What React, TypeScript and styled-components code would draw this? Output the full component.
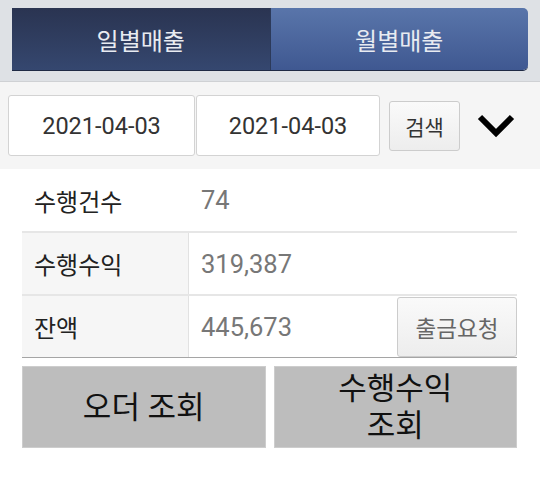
import React from 'react'
import styled, { createGlobalStyle } from 'styled-components'

const GlobalStyle = createGlobalStyle`
  body {
    margin: 0;
    background: #ffffff;
    font-family: Roboto, "Noto Sans CJK KR", sans-serif;
  }
`

const Header = styled.div`
  background: #dee1e5;
  padding: 8px 12px 11px;
  border-bottom: 1px solid #cfd1d4;
`

const Tabs = styled.div`
  display: flex;
  height: 62px;
  border-radius: 0 5px 5px 0;
  overflow: hidden;
  box-shadow: 0 1px 0 #1f2a44;
`

const Tab = styled.div<{ $active?: boolean }>`
  flex: 1;
  display: flex;
  align-items: center;
  justify-content: center;
  font-size: 24px;
  color: #e8ebf1;
  background: ${({ $active }) =>
    $active
      ? 'linear-gradient(#2a3451, #35476f)'
      : 'linear-gradient(#5975aa, #3f5891)'};
  border-left: ${({ $active }) => ($active ? 'none' : '1px solid #2c3a5a')};
`

const SearchBar = styled.div`
  display: flex;
  align-items: center;
  background: #f5f5f5;
  padding: 13px 8px 13px;
`

const DateInput = styled.input<{ $width: number }>`
  box-sizing: border-box;
  width: ${({ $width }) => $width}px;
  height: 61px;
  margin: 0;
  border: 1px solid #d3d3d3;
  border-radius: 3px;
  background: #ffffff;
  text-align: center;
  font-family: Roboto, "Noto Sans CJK KR", sans-serif;
  font-size: 23.5px;
  color: #333333;
  outline: none;
  & + & {
    margin-left: 1px;
  }
`

const GrayButton = styled.button`
  box-sizing: border-box;
  border: 1px solid #cccccc;
  border-radius: 3px;
  background: linear-gradient(#fafafa, #ededed);
  font-family: Roboto, "Noto Sans CJK KR", sans-serif;
  padding: 0;
  cursor: pointer;
`

const SearchButton = styled(GrayButton)`
  width: 71px;
  height: 50px;
  margin-left: 9px;
  font-size: 21px;
  color: #333333;
`

const ToggleIcon = styled.svg`
  margin-left: 17px;
`

const InfoTable = styled.div`
  margin: 0 23px 0 22px;
  border-bottom: 1px solid #a5a5a5;
`

const Row = styled.div<{ $plain?: boolean }>`
  display: grid;
  grid-template-columns: 167px 1fr;
  height: ${({ $plain }) => ($plain ? 62 : 63)}px;
  border-top: ${({ $plain }) => ($plain ? 'none' : '2px solid #e6e6e6')};
  box-sizing: border-box;
`

const Label = styled.div<{ $plain?: boolean }>`
  display: flex;
  align-items: center;
  padding-left: 12px;
  font-size: 24px;
  color: #222222;
  background: ${({ $plain }) => ($plain ? '#ffffff' : '#f6f6f6')};
  border-right: ${({ $plain }) => ($plain ? '1px solid transparent' : '1px solid #e2e2e2')};
`

const Value = styled.div`
  display: flex;
  align-items: center;
  justify-content: space-between;
  padding-left: 12px;
  font-size: 25.5px;
  color: #777777;
`

const WithdrawButton = styled(GrayButton)`
  width: 120px;
  height: 60px;
  font-size: 22.5px;
  color: #666666;
`

const Actions = styled.div`
  display: grid;
  grid-template-columns: 1fr 1fr;
  gap: 8px;
  margin: 8px 23px 0 22px;
`

const ActionButton = styled.button`
  height: 82px;
  border: 1px solid #cdcdcd;
  background: #bdbdbd;
  font-family: Roboto, "Noto Sans CJK KR", sans-serif;
  font-size: 31px;
  line-height: 37px;
  color: #111111;
  padding: 0;
`

export default function App() {
  return (
    <>
      <GlobalStyle />
      <Header>
        <Tabs>
          <Tab $active>일별매출</Tab>
          <Tab>월별매출</Tab>
        </Tabs>
      </Header>
      <SearchBar>
        <DateInput $width={187} readOnly value="2021-04-03" />
        <DateInput $width={184} readOnly value="2021-04-03" />
        <SearchButton>검색</SearchButton>
        <ToggleIcon width="38" height="28" viewBox="0 0 38 28">
          <path d="M3 5 L19 21 L35 5" fill="none" stroke="#000" strokeWidth="6" />
        </ToggleIcon>
      </SearchBar>
      <InfoTable>
        <Row $plain>
          <Label $plain>수행건수</Label>
          <Value>74</Value>
        </Row>
        <Row>
          <Label>수행수익</Label>
          <Value>319,387</Value>
        </Row>
        <Row>
          <Label>잔액</Label>
          <Value>
            445,673
            <WithdrawButton>출금요청</WithdrawButton>
          </Value>
        </Row>
      </InfoTable>
      <Actions>
        <ActionButton>오더 조회</ActionButton>
        <ActionButton>
          수행수익
          <br />
          조회
        </ActionButton>
      </Actions>
    </>
  )
}
